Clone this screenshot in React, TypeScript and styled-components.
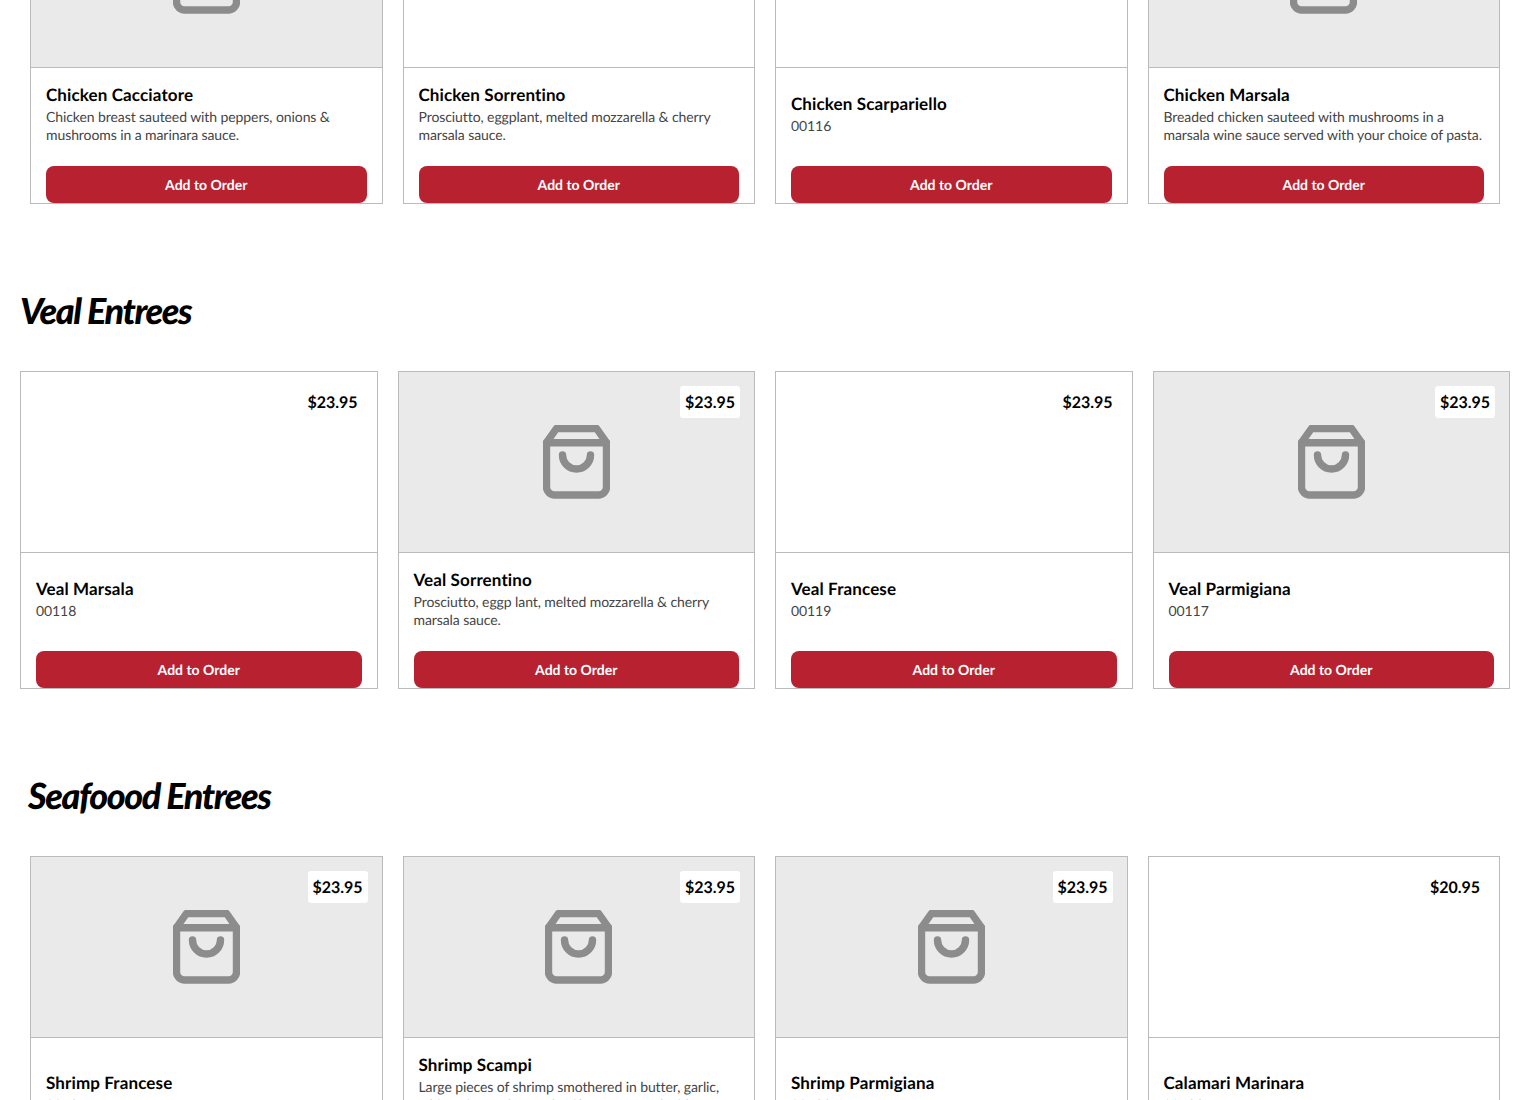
import React from "react";
import styled, { createGlobalStyle } from "styled-components";

const Global = createGlobalStyle`
  html, body {
    margin: 0;
    padding: 0;
    height: 1100px;
    overflow: hidden;
    background: #fff;
    font-family: Lato, "Liberation Sans", sans-serif;
    text-rendering: geometricPrecision;
  }
`;

const Page = styled.main`
  margin-top: -114px;
  display: flex;
  flex-direction: column;
`;

const Section = styled.section<{ $pad: number }>`
  padding: 0 ${(p) => p.$pad}px;
`;

const Heading = styled.h2<{ $shift?: number }>`
  margin: 0 0 0 ${(p) => p.$shift ?? 0}px;
  height: 167px;
  box-sizing: border-box;
  padding-top: 84px;
  font: italic 900 36px/44px Lato, "Liberation Sans", sans-serif;
  letter-spacing: -1.4px;
  color: #000;
`;

const Grid = styled.div`
  display: grid;
  grid-template-columns: repeat(4, 1fr);
  gap: 20px;
`;

const Card = styled.article`
  box-sizing: border-box;
  border: 1px solid #bbb;
  display: flex;
  flex-direction: column;
  background: #fff;
`;

const Media = styled.div<{ $placeholder: boolean }>`
  position: relative;
  height: 181px;
  box-sizing: border-box;
  flex: none;
  border-bottom: 1px solid #bbb;
  background: ${(p) => (p.$placeholder ? "#eaeaea" : "#fff")};
  display: flex;
  align-items: center;
  justify-content: center;
`;

const Price = styled.span`
  position: absolute;
  top: 14px;
  right: 14px;
  width: 60px;
  height: 32px;
  border-radius: 3px;
  background: #fff;
  display: flex;
  align-items: center;
  justify-content: center;
  font-size: 16px;
  font-weight: 700;
  color: #000;
`;

const Body = styled.div`
  flex: 1;
  padding: 0 15px;
  display: flex;
  flex-direction: column;
`;

const Info = styled.div`
  flex: 1;
  padding: 13.5px 0;
  display: flex;
  flex-direction: column;
  justify-content: center;
`;

const Title = styled.h3`
  margin: 0 0 1px;
  font-size: 17px;
  line-height: 25px;
  font-weight: 700;
  letter-spacing: 0.12px;
  color: #000;
`;

const Description = styled.p`
  margin: 0;
  font-size: 14px;
  line-height: 18px;
  letter-spacing: -0.085px;
  color: #444;
`;

const OrderButton = styled.button`
  margin-top: 9px;
  height: 37px;
  flex: none;
  border: 0;
  border-radius: 8px;
  padding: 0 0 1px;
  background: #b82230;
  color: #fff;
  font: 700 14px Lato, "Liberation Sans", sans-serif;
  text-rendering: geometricPrecision;
  cursor: pointer;
`;

const BagIcon = () => (
  <svg width="67" height="74" viewBox="0 0 67 74" fill="none" stroke="#8c8c8c" strokeWidth="7.4" strokeLinecap="round" strokeLinejoin="round">
    <path d="M3.5 17.7 L13.4 3.5 H53.6 L63.5 17.7 V62 a8 8 0 0 1 -8 8 H11.5 a8 8 0 0 1 -8 -8 Z" />
    <path d="M3.5 17.7 H63.5" />
    <path d="M19.5 30 a14 14 0 0 0 28 0" />
  </svg>
);

type Item = { name: string; text: string; price: string; image: boolean };

const MenuCard = ({ item }: { item: Item }) => (
  <Card>
    <Media $placeholder={item.image}>
      {item.image && <BagIcon />}
      <Price>{item.price}</Price>
    </Media>
    <Body>
      <Info>
        <Title>{item.name}</Title>
        <Description>{item.text}</Description>
      </Info>
      <OrderButton>Add to Order</OrderButton>
    </Body>
  </Card>
);

const chicken: Item[] = [
  { name: "Chicken Cacciatore", text: "Chicken breast sauteed with peppers, onions & mushrooms in a marinara sauce.", price: "$20.95", image: true },
  { name: "Chicken Sorrentino", text: "Prosciutto, eggplant, melted mozzarella & cherry marsala sauce.", price: "$20.95", image: false },
  { name: "Chicken Scarpariello", text: "00116", price: "$20.95", image: false },
  { name: "Chicken Marsala", text: "Breaded chicken sauteed with mushrooms in a marsala wine sauce served with your choice of pasta.", price: "$20.95", image: true },
];

const veal: Item[] = [
  { name: "Veal Marsala", text: "00118", price: "$23.95", image: false },
  { name: "Veal Sorrentino", text: "Prosciutto, eggp lant, melted mozzarella & cherry marsala sauce.", price: "$23.95", image: true },
  { name: "Veal Francese", text: "00119", price: "$23.95", image: false },
  { name: "Veal Parmigiana", text: "00117", price: "$23.95", image: true },
];

const seafood: Item[] = [
  { name: "Shrimp Francese", text: "00121", price: "$23.95", image: true },
  { name: "Shrimp Scampi", text: "Large pieces of shrimp smothered in butter, garlic, white wine and a touch of lemon, served with your choice of pasta.", price: "$23.95", image: true },
  { name: "Shrimp Parmigiana", text: "00122", price: "$23.95", image: true },
  { name: "Calamari Marinara", text: "00123", price: "$20.95", image: false },
];

export default function App() {
  return (
    <>
      <Global />
      <Page>
        <Section $pad={30}>
          <Grid>{chicken.map((i) => <MenuCard key={i.name} item={i} />)}</Grid>
        </Section>
        <Section $pad={20}>
          <Heading>Veal Entrees</Heading>
          <Grid>{veal.map((i) => <MenuCard key={i.name} item={i} />)}</Grid>
        </Section>
        <Section $pad={30}>
          <Heading $shift={-2}>Seafoood Entrees</Heading>
          <Grid>{seafood.map((i) => <MenuCard key={i.name} item={i} />)}</Grid>
        </Section>
      </Page>
    </>
  );
}
